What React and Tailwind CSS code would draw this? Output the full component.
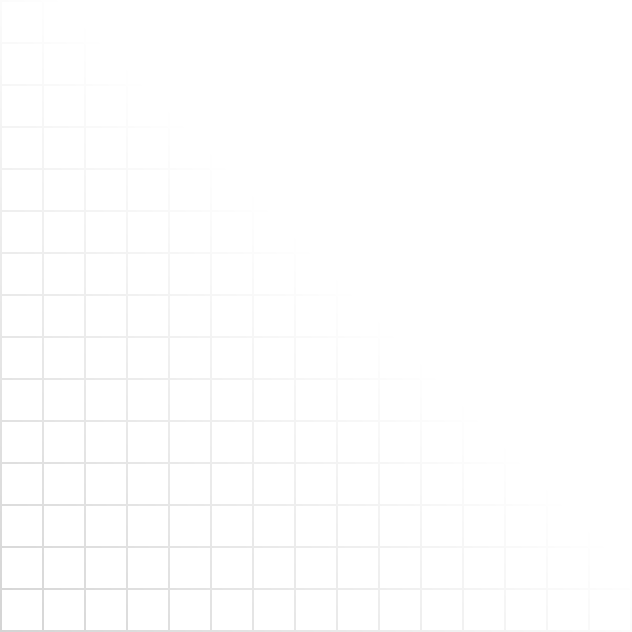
export default function App() {
  return (
    <div className="w-full h-[632px] bg-white">
      <div className="w-full h-full bg-[linear-gradient(to_right,#d4d4d4_2px,transparent_2px),linear-gradient(to_bottom,#d4d4d4_2px,transparent_2px)] bg-[size:42px_42px] [mask-image:linear-gradient(to_top_right,black,transparent_55%)]" />
    </div>
  );
}
